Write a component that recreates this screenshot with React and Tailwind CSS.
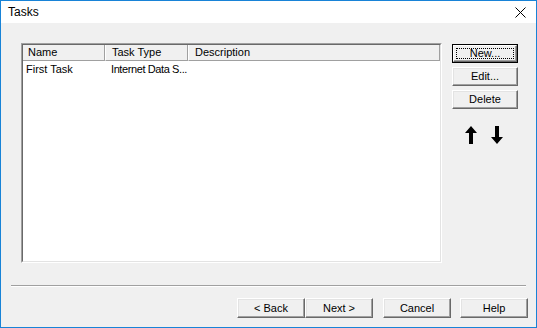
import React from "react";

const font = { fontFamily: '"Liberation Sans", Arial, sans-serif' };

function Btn({ children, w = "w-[67px]", h = "h-[20px]", def = false }) {
  if (def) {
    return (
      <div className={`${w} ${h} border border-black bg-[#f0f0f0]`}>
        <div className="w-full h-full border border-t-white border-l-white border-r-[#696969] border-b-[#696969] shadow-[inset_-1px_-1px_0_#a0a0a0] p-[2px]">
          <div className="w-full h-full border border-dotted border-black flex items-center justify-center text-[11px] text-black leading-none">
            {children}
          </div>
        </div>
      </div>
    );
  }
  return (
    <div
      className={`${w} ${h} bg-[#f0f0f0] border border-t-white border-l-white border-r-[#696969] border-b-[#696969] shadow-[inset_-1px_-1px_0_#a0a0a0,inset_1px_1px_0_#e3e3e3] flex items-center justify-center text-[11px] text-black leading-none`}
    >
      {children}
    </div>
  );
}

function Arrow({ down = false }) {
  return (
    <svg width="12" height="18" viewBox="0 0 12 18" className={down ? "rotate-180" : ""}>
      <polygon points="6,0 12,7 8,7 8,18 4,18 4,7 0,7" fill="#000" />
    </svg>
  );
}

export default function App() {
  return (
    <div
      style={font}
      className="w-[537px] h-[328px] flex flex-col border border-[#1883d7] bg-[#f0f0f0] overflow-hidden"
    >
      {/* title bar */}
      <div className="h-[22px] bg-white flex items-center justify-between pl-[7px] pr-[10px] shrink-0">
        <span className="text-[12px] text-black">Tasks</span>
        <svg width="11" height="11" viewBox="0 0 11 11">
          <path d="M0.5 0.5 L10.5 10.5 M10.5 0.5 L0.5 10.5" stroke="#000" strokeWidth="1" />
        </svg>
      </div>

      {/* body */}
      <div className="flex pl-[20px] pt-[20px]">
        {/* list view */}
        <div className="w-[421px] h-[220px] border border-t-[#a0a0a0] border-l-[#a0a0a0] border-r-white border-b-white">
          <div className="w-full h-full bg-white border border-t-[#696969] border-l-[#696969] border-r-[#e3e3e3] border-b-[#e3e3e3] flex flex-col">
            <div className="flex h-[16px] text-[11px] text-black leading-none">
              <div className="w-[82px] bg-[#f0f0f0] border-r border-b border-r-[#a0a0a0] border-b-[#a0a0a0] flex items-center pl-[5px]">Name</div>
              <div className="w-[83px] bg-[#f0f0f0] border-l border-l-white border-r border-b border-r-[#a0a0a0] border-b-[#a0a0a0] flex items-center pl-[6px]">Task Type</div>
              <div className="w-[252px] bg-[#f0f0f0] border-l border-l-white border-r border-b border-r-[#a0a0a0] border-b-[#a0a0a0] flex items-center pl-[6px]">Description</div>
            </div>
            <div className="flex h-[16px] items-center text-[11px] text-black leading-none">
              <div className="w-[82px] pl-[3px] whitespace-nowrap">First Task</div>
              <div className="w-[83px] pl-[6px] whitespace-nowrap tracking-[-0.4px]">Internet Data S...</div>
            </div>
          </div>
        </div>

        {/* side buttons */}
        <div className="ml-[10px] mt-[1px] flex flex-col gap-[4px]">
          <Btn w="w-[66px]" h="h-[19px]" def>New...</Btn>
          <Btn w="w-[66px]" h="h-[19px]">Edit...</Btn>
          <Btn w="w-[66px]" h="h-[19px]">Delete</Btn>
          <div className="flex gap-[14px] mt-[13px] pl-[13px]">
            <Arrow />
            <Arrow down />
          </div>
        </div>
      </div>

      {/* separator */}
      <div className="mx-[10px] mt-[22px] h-[2px] border-t border-t-[#a0a0a0] border-b border-b-white" />

      {/* bottom buttons */}
      <div className="flex justify-end pr-[8px] mt-[11px]">
        <Btn w="w-[68px]">&lt; Back</Btn>
        <Btn w="w-[68px]">Next &gt;</Btn>
        <div className="w-[10px]" />
        <Btn w="w-[68px]">Cancel</Btn>
        <div className="w-[9px]" />
        <Btn w="w-[68px]">Help</Btn>
      </div>
    </div>
  );
}
